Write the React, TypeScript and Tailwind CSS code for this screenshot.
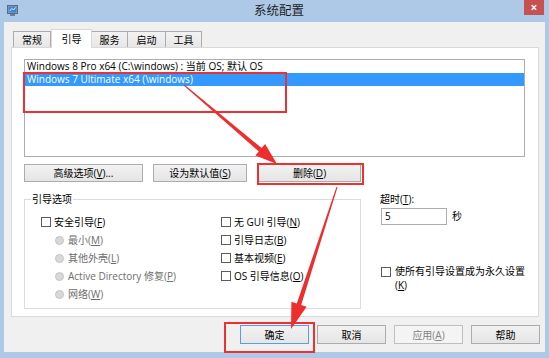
import type { ReactNode } from 'react';
import clsx from 'clsx';

function U({ children }: { children: ReactNode }) {
  return <span className="underline underline-offset-[1px]">{children}</span>;
}

function Btn({ children, className, disabled = false, isDefault = false }: { children: ReactNode; className?: string; disabled?: boolean; isDefault?: boolean }) {
  return <div className={clsx(
    'flex items-center justify-center border leading-none',
    disabled ? 'border-[#bfbfbf] bg-[#f4f4f4] text-[#838383]'
      : isDefault ? 'border-[#5b9ee0] bg-linear-to-b from-[#f2f2f2] to-[#e6e6e6] text-black'
      : 'border-[#acacac] bg-linear-to-b from-[#f2f2f2] to-[#e5e5e5] text-black',
    className,
  )}>{children}</div>;
}

function Check({ children, className }: { children: ReactNode; className?: string }) {
  return <div className={clsx('flex h-[18px] items-center gap-[3px]', className)}>
    <span className="h-[10px] w-[10px] shrink-0 border border-[#5c5c5c] bg-white" />
    <span>{children}</span>
  </div>;
}

function Radio({ children }: { children: ReactNode }) {
  return <div className="ml-[14px] flex h-[18px] items-center gap-[4px] text-[#6d6d6d]">
    <span className="h-[9px] w-[9px] shrink-0 rounded-full border border-[#c4c4c4] bg-[#d8d8d8]" />
    <span>{children}</span>
  </div>;
}

function arrowPoints(sx: number, sy: number, tx: number, ty: number, head: number, hw: number, w0: number, w1: number) {
  const dx = tx - sx;
  const dy = ty - sy;
  const len = Math.hypot(dx, dy);
  const ux = dx / len;
  const uy = dy / len;
  const nx = -uy;
  const ny = ux;
  const bx = tx - ux * head;
  const by = ty - uy * head;
  const pts = [
    [sx + nx * w0, sy + ny * w0],
    [bx + nx * w1, by + ny * w1],
    [bx + nx * hw, by + ny * hw],
    [tx, ty],
    [bx - nx * hw, by - ny * hw],
    [bx - nx * w1, by - ny * w1],
    [sx - nx * w0, sy - ny * w0],
  ];
  return pts.map(([x, y]) => `${x.toFixed(1)},${y.toFixed(1)}`).join(' ');
}

const tabs = [
  { label: '常规', w: 'w-[38px]' },
  { label: '引导', w: 'w-[41px]', active: true },
  { label: '服务', w: 'w-[37px]' },
  { label: '启动', w: 'w-[39px]' },
  { label: '工具', w: 'w-[37px]' },
];

export default function App() {
  return <div className="relative h-[358px] w-[549px] overflow-hidden bg-[#adc9e7] font-[family-name:'Open_Sans','Noto_Sans_CJK_SC',sans-serif] text-[10px] text-black">
    {/* title bar */}
    <div className="flex h-[22px] items-center">
      <svg className="ml-[7px] h-[12px] w-[11px]" viewBox="0 0 11 12">
        <rect x="0.5" y="0.5" width="10" height="8" fill="#8fa4bd" stroke="#5a6c84" />
        <rect x="1.5" y="1.5" width="8" height="6" fill="#3f86d8" />
        <path d="M2.5 6 L5 3.5 L6.5 5 L8.5 2.5" stroke="#e6f0ff" strokeWidth="1" fill="none" />
        <rect x="3" y="9" width="5" height="2" fill="#6f7f92" />
      </svg>
      <div className="flex-1 pl-[16px] text-center text-[12.5px] text-[#1e1e1e]">系统配置</div>
      <div className="mr-[5px] flex h-[15px] w-[20px] items-center justify-center self-start bg-[#c75050] text-[12px] font-bold leading-none text-white">×</div>
    </div>

    {/* window body */}
    <div className="mx-[4px] h-[330px] bg-[#f0f0f0] pl-[7px] pt-[7px]">
      <div className="ml-[2px] flex h-[18px] items-end">
        {tabs.map((t) => <div key={t.label} className={clsx(
          'flex items-center justify-center border border-b-0 leading-none',
          t.w,
          t.active ? 'relative z-10 -mb-px h-[19px] border-[#d9d9d9] bg-white' : '-ml-px h-[16px] border-[#acacac] bg-linear-to-b from-[#f2f2f2] to-[#e7e7e7] first:ml-0',
        )}>{t.label}</div>)}
      </div>

      <div className="h-[270px] w-[528px] border border-[#d9d9d9] bg-white pl-[12px] pt-[11px]">
        {/* OS list */}
        <div className="h-[98px] w-[501px] border border-[#abadb3] bg-white">
          <div className="flex h-[13px] items-center pl-[2px]">Windows 8 Pro x64 (C:\windows) : 当前 OS; 默认 OS</div>
          <div className="flex h-[13px] items-center bg-[#3399ff] pl-[2px] text-white">Windows 7 Ultimate x64 (\windows)</div>
        </div>

        <div className="mt-[7px] flex h-[18px]">
          <Btn className="w-[119px]">高级选项(<U>V</U>)...</Btn>
          <Btn className="ml-[10px] w-[94px]">设为默认值(<U>S</U>)</Btn>
          <Btn className="ml-[11px] w-[103px]">删除(<U>D</U>)</Btn>
        </div>

        <div className="mt-[11px] flex">
          {/* boot options group */}
          <div className="relative h-[116px] w-[337px] pt-[6px]">
            <div className="flex h-[110px] border border-[#dcdcdc] pl-[16px] pt-[13px]">
              <div className="w-[180px]">
                <Check>安全引导(<U>F</U>)</Check>
                <Radio>最小(<U>M</U>)</Radio>
                <Radio>其他外壳(<U>L</U>)</Radio>
                <Radio>Active Directory 修复(<U>P</U>)</Radio>
                <Radio>网络(<U>W</U>)</Radio>
              </div>
              <div>
                <Check>无 GUI 引导(<U>N</U>)</Check>
                <Check>引导日志(<U>B</U>)</Check>
                <Check>基本视频(<U>E</U>)</Check>
                <Check>OS 引导信息(<U>O</U>)</Check>
              </div>
            </div>
            <span className="absolute left-[7px] top-0 bg-white px-[1px] leading-[12px]">引导选项</span>
          </div>

          {/* timeout */}
          <div className="ml-[19px] flex flex-col">
            <div className="leading-[12px]">超时(<U>T</U>):</div>
            <div className="mt-[3px] flex items-center">
              <div className="ml-[1px] flex h-[17px] w-[66px] items-center border border-[#abadb3] bg-white pl-[3px]">5</div>
              <span className="ml-[5px]">秒</span>
            </div>
            <div className="ml-[1px] mt-[39px] flex items-start gap-[4px]">
              <span className="mt-[3px] h-[10px] w-[10px] shrink-0 border border-[#5c5c5c] bg-white" />
              <span className="leading-[14px]">使所有引导设置成为永久设置<br />(<U>K</U>)</span>
            </div>
          </div>
        </div>
      </div>

      <div className="mt-[8px] flex h-[19px] justify-end gap-[8px] pr-[5px]">
        <Btn className="w-[69px]" isDefault>确定</Btn>
        <Btn className="w-[69px]">取消</Btn>
        <Btn className="w-[69px]" disabled>应用(<U>A</U>)</Btn>
        <Btn className="w-[69px]">帮助</Btn>
      </div>
    </div>

    {/* annotations */}
    <div className="pointer-events-none absolute left-[23px] top-[72px] h-[41px] w-[264px] border-2 border-[#ee3030]" />
    <div className="pointer-events-none absolute left-[257px] top-[163px] h-[22px] w-[107px] border-2 border-[#ee3030]" />
    <div className="pointer-events-none absolute left-[224px] top-[322px] h-[31px] w-[91px] border-2 border-[#ee3030]" />
    <svg className="pointer-events-none absolute left-0 top-0" width="549" height="358">
      <polygon points={arrowPoints(184, 85, 277, 164, 22, 7.5, 0.5, 2.2)} fill="#ee2d2d" />
      <polygon points={arrowPoints(337, 187, 291, 329, 26, 8, 0.5, 2.3)} fill="#ee2d2d" />
    </svg>
  </div>;
}
